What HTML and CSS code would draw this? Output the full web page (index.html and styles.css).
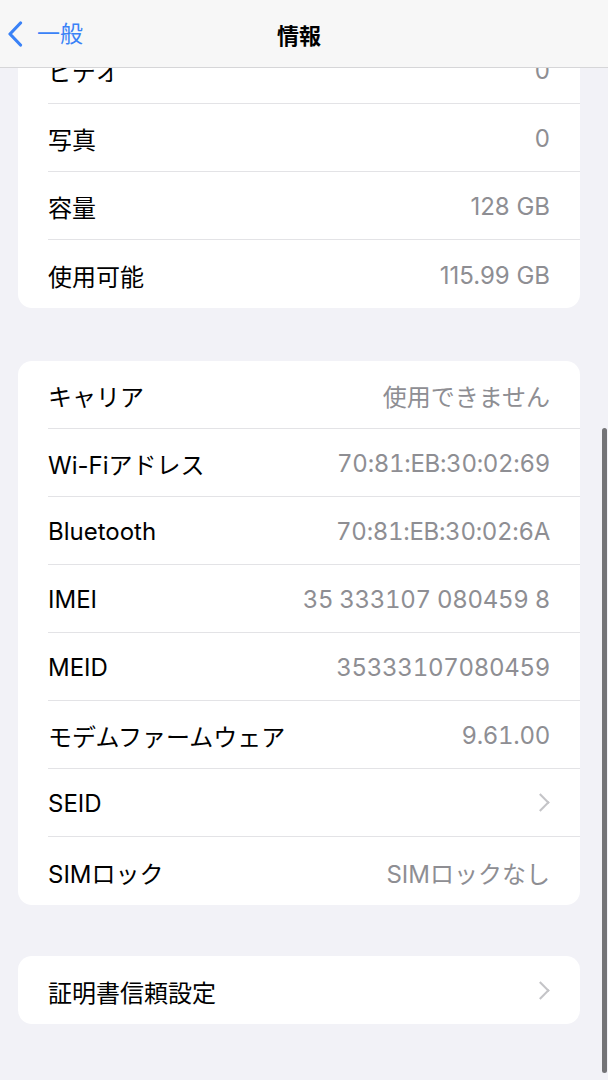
FILE: index.html
```html
<!DOCTYPE html>
<html lang="ja">
<head>
    <meta charset="UTF-8">
    <meta name="viewport" content="width=device-width, initial-scale=1.0">
    <title>情報</title>
    <link rel="stylesheet" href="styles.css">
</head>
<body>
    <header class="nav-bar">
        <a class="back-link" href="#">
            <svg class="back-chevron" width="16" height="26" viewBox="0 0 16 26">
                <path d="M13.5 2 L3 13 L13.5 24" fill="none" stroke="currentColor" stroke-width="3.2" stroke-linecap="round" stroke-linejoin="round"/>
            </svg>
            <span>一般</span>
        </a>
        <h1 class="nav-title">情報</h1>
    </header>

    <main class="content">
        <!-- storage group (scrolled partly under the nav bar) -->
        <section class="group">
            <div class="row">
                <span class="label">ビデオ</span>
                <span class="value">0</span>
            </div>
            <div class="row">
                <span class="label">写真</span>
                <span class="value">0</span>
            </div>
            <div class="row">
                <span class="label">容量</span>
                <span class="value">128 GB</span>
            </div>
            <div class="row">
                <span class="label">使用可能</span>
                <span class="value">115.99 GB</span>
            </div>
        </section>

        <!-- network group -->
        <section class="group network">
            <div class="row">
                <span class="label">キャリア</span>
                <span class="value">使用できません</span>
            </div>
            <div class="row">
                <span class="label">Wi-Fiアドレス</span>
                <span class="value mono">70:81:EB:30:02:69</span>
            </div>
            <div class="row">
                <span class="label">Bluetooth</span>
                <span class="value mono">70:81:EB:30:02:6A</span>
            </div>
            <div class="row">
                <span class="label">IMEI</span>
                <span class="value mono">35 333107 080459 8</span>
            </div>
            <div class="row">
                <span class="label">MEID</span>
                <span class="value mono">35333107080459</span>
            </div>
            <div class="row">
                <span class="label">モデムファームウェア</span>
                <span class="value mono">9.61.00</span>
            </div>
            <a class="row link-row" href="#">
                <span class="label">SEID</span>
                <span class="chevron"></span>
            </a>
            <div class="row">
                <span class="label">SIMロック</span>
                <span class="value">SIMロックなし</span>
            </div>
        </section>

        <section class="group">
            <a class="row link-row" href="#">
                <span class="label">証明書信頼設定</span>
                <span class="chevron"></span>
            </a>
        </section>
    </main>

    <div class="scroll-indicator"></div>
</body>
</html>
```

FILE: styles.css
```css
body {
    font-family: Inter, "Noto Sans CJK JP", sans-serif;
    background-color: #f2f2f7;
    margin: 0;
    height: 1080px;
    overflow: hidden;
}
.nav-bar {
    position: fixed;
    top: 0;
    left: 0;
    right: 0;
    height: 67px;
    padding-right: 10px;
    background-color: #f7f7f7;
    border-bottom: 1px solid #d6d6d8;
    display: flex;
    align-items: center;
    justify-content: center;
    z-index: 2;
}
.back-link {
    position: absolute;
    left: 7px;
    top: 21px;
    display: flex;
    align-items: center;
    gap: 14px;
    color: #3a82f7;
    text-decoration: none;
    font-size: 23px;
    line-height: 26px;
}
.nav-title {
    margin: 0;
    font-size: 22px;
    font-weight: 700;
    color: #000;
}
.content {
    padding: 36px 28px 0 18px;
}
.group {
    background-color: #fff;
    border-radius: 14px;
    margin-bottom: 53px;
    overflow: hidden;
}
.group.network {
    margin-bottom: 51px;
}
.row {
    height: 68px;
    margin-left: 30px;
    padding-right: 30px;
    display: flex;
    align-items: center;
    justify-content: space-between;
    border-bottom: 1px solid #e3e3e6;
    box-sizing: border-box;
    font-size: 24px;
    color: #000;
    text-decoration: none;
}
.row:last-child {
    border-bottom: none;
}
.label {
    padding-top: 2px;
}
.value {
    padding-top: 2px;
    color: #8e8e93;
}
.mono {
    font-variant-numeric: tabular-nums;
    letter-spacing: -0.3px;
}
.chevron {
    width: 11px;
    height: 11px;
    border-top: 2.5px solid #c4c4c7;
    border-right: 2.5px solid #c4c4c7;
    transform: rotate(45deg);
    margin-right: 3px;
}
.scroll-indicator {
    position: fixed;
    right: 1px;
    top: 428px;
    width: 5px;
    height: 645px;
    border-radius: 3px;
    background-color: #747477;
}
```
